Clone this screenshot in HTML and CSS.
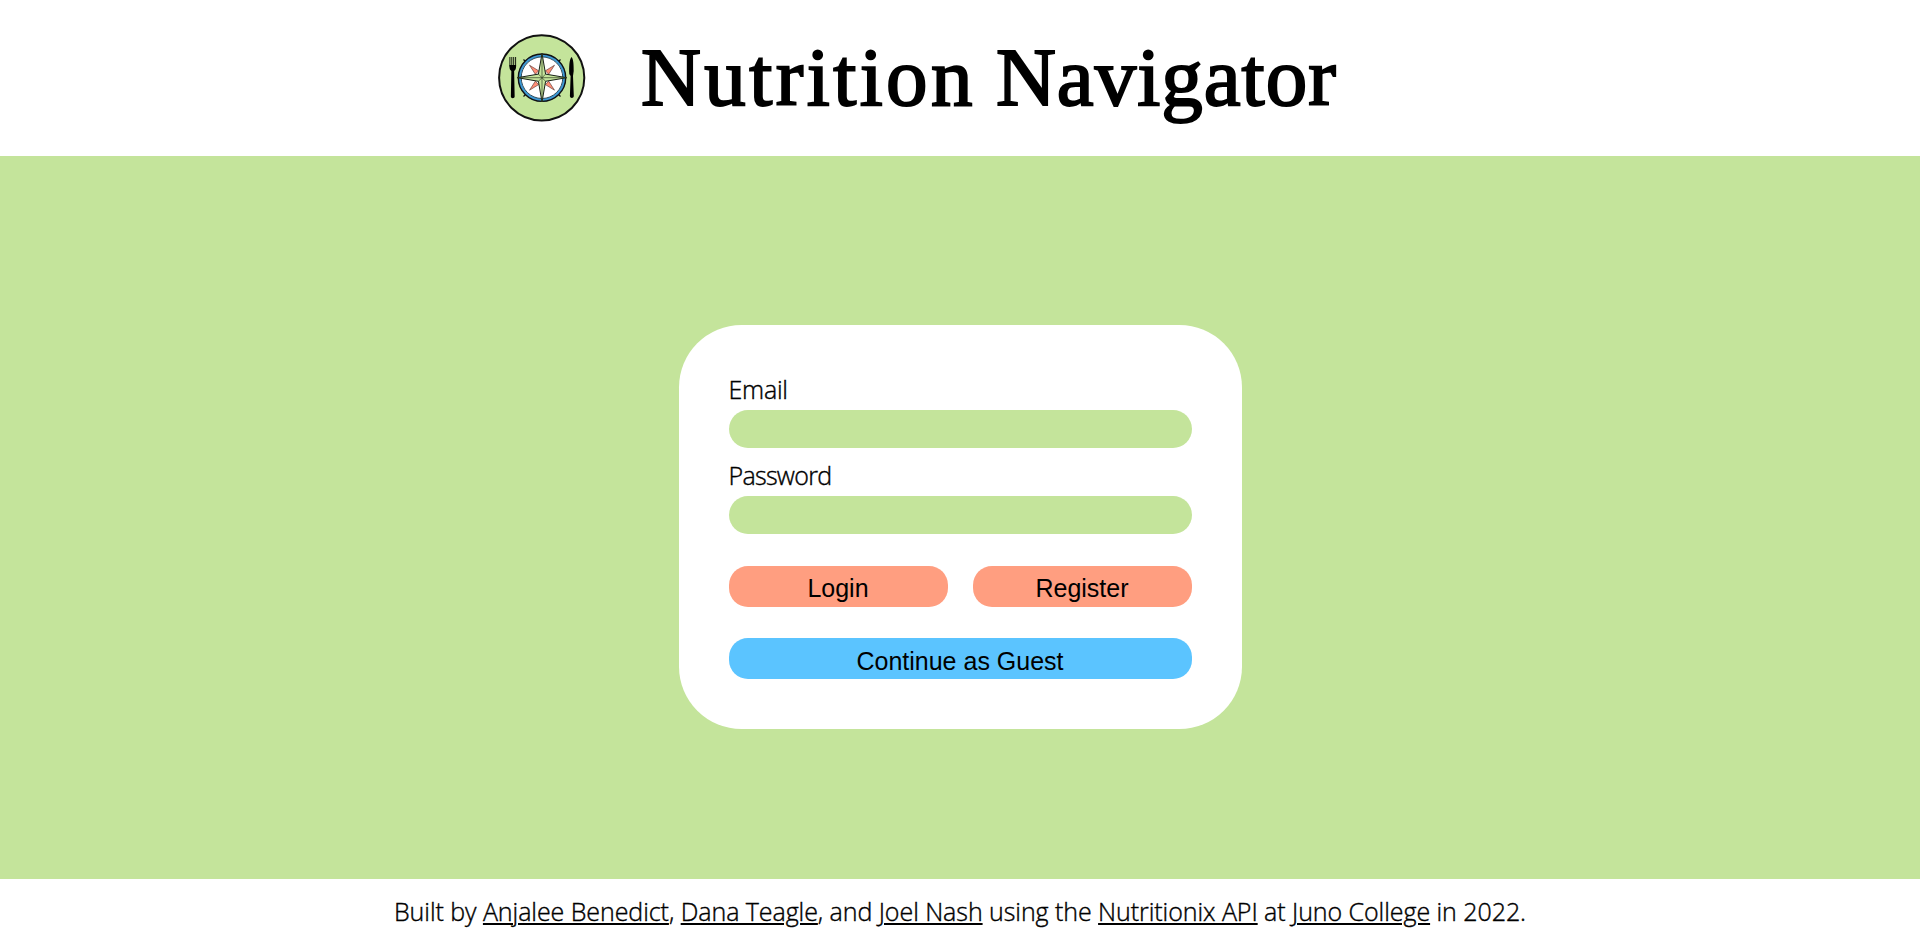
FILE: index.html
```html
<!DOCTYPE html>
<html lang="en">
<head>
<meta charset="utf-8">
<title>Nutrition Navigator</title>
<link rel="stylesheet" href="styles.css">
</head>
<body>
<header class="header">
  <svg class="logo" viewBox="0 0 104 104" aria-hidden="true">
    <circle cx="51.7" cy="52.800" r="42.6" fill="#c4e49b" stroke="#111" stroke-width="2"/>
    <g stroke="#111" stroke-width="1.2"><path d="M33.5 34.5l37 37M70.5 34.5l-37 37"/></g>
    <circle cx="52" cy="52.7" r="22.5" fill="#fff" stroke="#3d9ad6" stroke-width="3"/>
    <circle cx="52" cy="52.7" r="23.7" fill="none" stroke="#111" stroke-width="1.4"/>
    <circle cx="52" cy="52.7" r="20.8" fill="none" stroke="#17394d" stroke-width=".9"/>
    <path d="M39.5 40.2l9.2 5.6-3.4 3.4zM64.5 40.2l-9.2 5.6 3.4 3.4zM39.5 65.2l9.2-5.6-3.4-3.4zM64.5 65.2l-9.2-5.6 3.4-3.4z" fill="#ff8d76" stroke="#50302c" stroke-width=".6"/>
    <path d="M52 28.5l3.6 20.6 21 3.6-21 3.6L52 77l-3.6-20.7-21-3.6 21-3.6z" fill="#c4e49b" stroke="#172016" stroke-width="1"/>
    <path d="M52 28.5V77M27.4 52.7h49.2M48.4 49.1l7.2 7.2M55.6 49.1l-7.2 7.2" stroke="#344027" stroke-width=".7"/>
    <path d="M19.900 32v9.500M21.800 32v9.500M23.700 32v9.500M25.600 32v9.500" stroke="#000" stroke-width=".9"/>
    <path d="M19.450 40h6.600v2c0 2-.8 3.200-1.900 4l.5 25.500c0 2.200-3.800 2.200-3.800 0l.5-25.500c-1.100-.8-1.900-2-1.900-4z"/>
    <path d="M81.500 32c2.100 2.100 2.200 8.800 2.200 14l-.7 5 .8 20c0 2.500-3.900 2.500-3.900 0l.7-20-1.300-2c-.3-6.300-.1-14.700 2.200-17z"/>
  </svg>
  <h1 class="title"><span class="word-first">Nutrition</span><span class="word-second">Navigator</span></h1>
</header>
<main class="main">
  <form class="card">
    <label class="label" for="email">Email</label>
    <input class="input" id="email" type="email">
    <label class="label password-label" for="password">Password</label>
    <input class="input" id="password" type="password">
    <div class="actions">
      <button class="button" type="button">Login</button>
      <button class="button" type="button">Register</button>
    </div>
    <button class="button guest" type="button">Continue as Guest</button>
  </form>
</main>
<footer class="footer">
  <p class="credit">Built by <a class="link" href="#">Anjalee Benedict</a>, <a class="link" href="#">Dana Teagle</a>, and <a class="link" href="#">Joel Nash</a> using the <a class="link" href="#">Nutritionix API</a> at <a class="link" href="#">Juno College</a> in 2022.</p>
</footer>
</body>
</html>
```
FILE: styles.css
```css
* { box-sizing: border-box; }
body {
  margin: 0;
  height: 941px;
  display: flex;
  flex-direction: column;
  overflow: hidden;
  background: #fff;
  color: #000;
  font: 300 25px/34px "Segoe UI", "Open Sans", sans-serif;
}
.header {
  height: 156px;
  flex: none;
  display: flex;
  align-items: center;
  padding-left: 490px;
}
.logo { width: 104px; height: 104px; flex: none; margin-top: -2px; }
.title {
  display: flex;
  gap: 20px;
  margin: -2px 0 0 47px;
  font: normal 83px/100px "Liberation Serif", serif;
  white-space: nowrap;
  -webkit-text-stroke: 2px #000;
}
.word-first { letter-spacing: 3.4px; }
.word-second { letter-spacing: 1px; }
.main {
  flex: 1;
  display: flex;
  align-items: center;
  justify-content: center;
  padding: 19px 0 0;
  background: #c4e49b;
}
.card {
  display: flex;
  flex-direction: column;
  width: 563px;
  height: 404px;
  padding: 48px 50px 50px;
  border-radius: 62.5px;
  background: #fff;
}
.label {
  height: 38px;
  margin-top: -1px;
  letter-spacing: -.25px;
  -webkit-text-stroke: .4px #000;
}
.password-label { letter-spacing: -.7px; }
.input {
  width: 100%;
  height: 38px;
  margin: 0 0 11px;
  padding: 0 16px;
  border: 0;
  border-radius: 19px;
  background: #c4e49b;
  font: inherit;
}
.actions { display: flex; gap: 25px; margin: 21px 0 31px; }
.button {
  flex: 1;
  height: 41px;
  padding: 4px 0 0;
  border: 0;
  border-radius: 19px;
  background: #ff9e80;
  color: #000;
  font: 25px/37px "Liberation Sans", Arial, sans-serif;
}
.guest { flex: none; background: #5bc4ff; padding-top: 5px; }
.footer { height: 62px; flex: none; text-align: center; }
.credit {
  margin: 0;
  padding-top: 15px;
  letter-spacing: -.06px;
  white-space: nowrap;
  -webkit-text-stroke: .4px #000;
}
.link { color: inherit; text-decoration: underline; text-decoration-thickness: 2px; text-underline-offset: 2px; }
```
